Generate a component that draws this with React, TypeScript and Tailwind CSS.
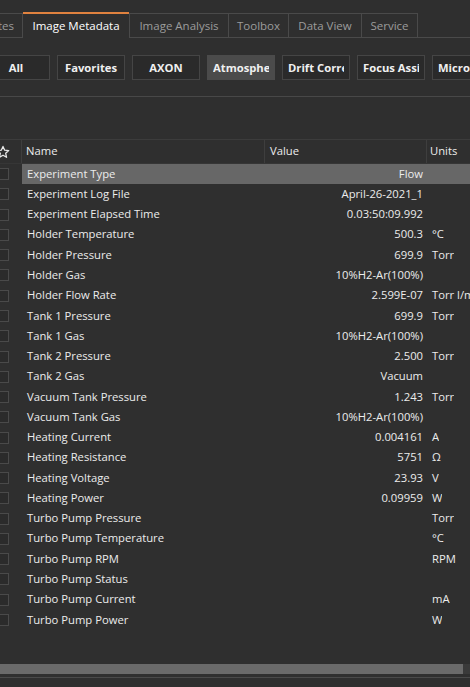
import React from "react";

const rows: [string, string, string][] = [
  ["Experiment Type", "Flow", ""],
  ["Experiment Log File", "April-26-2021_1", ""],
  ["Experiment Elapsed Time", "0.03:50:09.992", ""],
  ["Holder Temperature", "500.3", "°C"],
  ["Holder Pressure", "699.9", "Torr"],
  ["Holder Gas", "10%H2-Ar(100%)", ""],
  ["Holder Flow Rate", "2.599E-07", "Torr l/min"],
  ["Tank 1 Pressure", "699.9", "Torr"],
  ["Tank 1 Gas", "10%H2-Ar(100%)", ""],
  ["Tank 2 Pressure", "2.500", "Torr"],
  ["Tank 2 Gas", "Vacuum", ""],
  ["Vacuum Tank Pressure", "1.243", "Torr"],
  ["Vacuum Tank Gas", "10%H2-Ar(100%)", ""],
  ["Heating Current", "0.004161", "A"],
  ["Heating Resistance", "5751", "Ω"],
  ["Heating Voltage", "23.93", "V"],
  ["Heating Power", "0.09959", "W"],
  ["Turbo Pump Pressure", "", "Torr"],
  ["Turbo Pump Temperature", "", "°C"],
  ["Turbo Pump RPM", "", "RPM"],
  ["Turbo Pump Status", "", ""],
  ["Turbo Pump Current", "", "mA"],
  ["Turbo Pump Power", "", "W"],
];

const tabs = ["Image Analysis", "Toolbox", "Data View", "Service"];
const tabWidths = ["w-[99px]", "w-[60px]", "w-[73px]", "w-[57px]"];

const filters = ["Favorites", "AXON", "Atmosphere", "Drift Correction", "Focus Assist", "Microscope"];

export default function App() {
  return (
    <div className="w-[470px] h-[687px] overflow-hidden bg-[#2f2f2f] text-[#ececec] font-['Open_Sans','Noto_Sans',sans-serif] flex flex-col">
      {/* Tab bar */}
      <div className="pt-[12px] flex border-b border-[#4a4a4a] h-[38px] shrink-0">
        <div className="w-[23px] h-[25px] mt-[1px] border-t border-r border-[#4a4a4a] flex justify-end items-center overflow-hidden text-[11.5px] text-[#9c9c9c] pr-[8px]">
          <span className="whitespace-nowrap">Notes</span>
        </div>
        <div className="w-[106px] h-[26px] border-t-2 border-[#e0823f] flex items-center justify-center text-[11.5px] text-white bg-[#2f2f2f] -mb-px">
          <span className="whitespace-nowrap">Image Metadata</span>
        </div>
        {tabs.map((t, i) => (
          <div
            key={t}
            className={`${tabWidths[i]} h-[25px] mt-[1px] border-t border-l border-[#4a4a4a] ${i === tabs.length - 1 ? "border-r" : ""} flex items-center justify-center text-[11.5px] text-[#9c9c9c]`}
          >
            <span className="whitespace-nowrap">{t}</span>
          </div>
        ))}
      </div>

      {/* Filter buttons */}
      <div className="h-[59px] shrink-0 flex items-start pt-[17px] gap-[7px] -ml-[18px] border-b border-[#484848]">
        <div className="w-[68px] h-[25px] shrink-0 border border-[#454545] bg-[#2a2a2a] flex items-center justify-center pt-[2px] text-[11.25px] font-bold text-[#f0f0f0]">
          All
        </div>
        {filters.map((f) => (
          <div
            key={f}
            className={`w-[68px] h-[25px] shrink-0 border ${f === "Atmosphere" ? "bg-[#4b4b4b] border-[#4b4b4b]" : "bg-[#2a2a2a] border-[#454545]"} flex items-center px-[5px] pt-[2px] text-[11.25px] font-bold text-[#f0f0f0]`}
          >
            <div className="w-full overflow-hidden flex [justify-content:safe_center]">
              <span className="whitespace-nowrap">{f}</span>
            </div>
          </div>
        ))}
      </div>

      {/* Empty band */}
      <div className="h-[43px] shrink-0 border-b border-[#3c3c3c]" />

      {/* Table */}
      <div className="flex-1 flex flex-col">
        <div className="h-[24px] shrink-0 flex items-center text-[11.25px] border-b border-[#363636]">
          <div className="w-[22px] h-full shrink-0 border-r border-[#3e3e3e] flex items-center">
            <svg width="14" height="14" viewBox="0 0 24 24" className="-ml-[4px]" fill="none" stroke="#e8e8e8" strokeWidth="2.2" strokeLinejoin="round">
              <polygon points="12,2.5 14.9,8.9 21.8,9.6 16.6,14.3 18.1,21.1 12,17.6 5.9,21.1 7.4,14.3 2.2,9.6 9.1,8.9" />
            </svg>
          </div>
          <div className="w-[243px] h-full shrink-0 border-r border-[#3e3e3e] flex items-center pl-[4px]">Name</div>
          <div className="w-[162px] h-full shrink-0 border-r border-[#3e3e3e] flex items-center pl-[5px]">Value</div>
          <div className="h-full flex items-center pl-[3px]">Units</div>
        </div>
        {rows.map(([n, v, u], i) => (
          <div key={n} className="h-[20.28px] shrink-0 flex items-center text-[11.25px]">
            <div className="w-[22px] h-full shrink-0 flex items-center">
              <div className="w-[12px] h-[12px] -ml-[3px] border border-[#4a4a4a] bg-[#2b2b2b]" />
            </div>
            <div className={`flex-1 h-full flex items-center ${i === 0 ? "bg-[#676767]" : ""}`}>
              <div className="w-[243px] shrink-0 pl-[5px] whitespace-nowrap">{n}</div>
              <div className="w-[162px] shrink-0 pr-[4px] text-right whitespace-nowrap">{v}</div>
              <div className="pl-[5px] whitespace-nowrap overflow-hidden">{u}</div>
            </div>
          </div>
        ))}
        <div className="flex-1" />
        {/* scrollbar */}
        <div className="h-[10px] shrink-0 bg-[#3a3a3a] flex mb-[3px]">
          <div className="w-[463px] h-full bg-[#6a6a6a]" />
        </div>
        <div className="h-[1px] shrink-0 bg-[#4a4a4a]" />
        <div className="h-[9px] shrink-0" />
      </div>
    </div>
  );
}
